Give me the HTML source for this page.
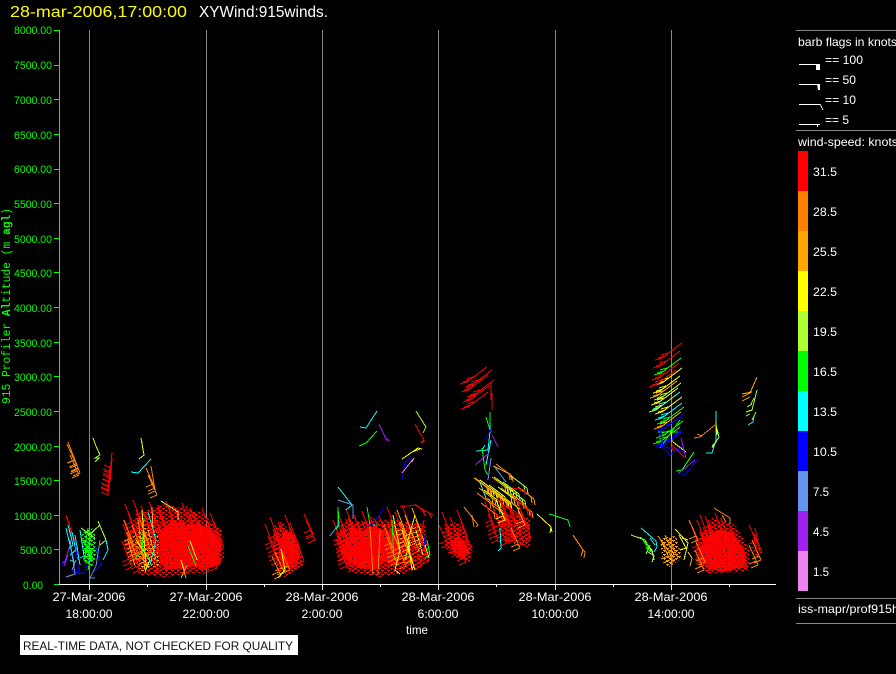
<!DOCTYPE html>
<html><head><meta charset="utf-8"><style>
html,body{margin:0;padding:0;background:#000;width:896px;height:674px;overflow:hidden}
svg{display:block}
text{font-family:"Liberation Sans",sans-serif;font-size:12px;fill:#fff}
.g{fill:#0f0;font-size:11px}
.x{text-anchor:middle}
</style></head><body>
<svg width="896" height="674" viewBox="0 0 896 674" xmlns="http://www.w3.org/2000/svg">
<defs>
<pattern id="sp" width="9" height="7" patternUnits="userSpaceOnUse"><rect width="9" height="7" fill="#f00"/><rect x="2" y="1" width="1" height="1" fill="#000"/><rect x="6" y="4" width="1" height="1" fill="#000"/><rect x="7" y="1" width="1" height="1" fill="#000"/><rect x="1" y="5" width="1" height="1" fill="#000"/></pattern>
<pattern id="p2" width="6" height="4" patternUnits="userSpaceOnUse"><g fill="#f00"><rect x="0" y="0" width="3" height="1"/><rect x="3" y="2" width="3" height="1"/><rect x="1" y="1" width="1" height="1"/><rect x="4" y="3" width="1" height="1"/></g></pattern>
<pattern id="p3" width="6" height="4" patternUnits="userSpaceOnUse"><g fill="#0f0"><rect x="0" y="0" width="3" height="1"/><rect x="3" y="2" width="3" height="1"/><rect x="1" y="1" width="1" height="1"/><rect x="4" y="3" width="1" height="1"/></g></pattern>
<pattern id="p4" width="6" height="4" patternUnits="userSpaceOnUse"><g fill="#ffa500"><rect x="0" y="0" width="3" height="1"/><rect x="3" y="2" width="3" height="1"/><rect x="1" y="1" width="1" height="1"/><rect x="4" y="3" width="1" height="1"/></g></pattern>
<path id="t" d="M0 0L-10 -26M0 0L-7 3M-2 -4L-9 -1M-3 -8L-10 -5"/>
<path id="s" d="M0 0L-9 -20M0 0L-7 3M-2 -4L-9 -1"/>
<path id="u" d="M0 0L20 -15M0 0L-7 2M3 -2L-4 0M6 -5L-1 -3"/>
<path id="v" d="M0 0L-16 -12M0 0L1 6M-3 -2L-2 4"/>
<path id="w" d="M0 0L2 -24M0 0L-7 -3M0 -4L-7 -7M1 -8L-6 -11"/>
<g id="c"><use href="#t" x="3" y="4"/><use href="#t" x="11" y="0"/><use href="#t" x="19" y="6"/><use href="#t" x="27" y="2"/><use href="#t" x="35" y="7"/><use href="#t" x="6" y="13"/><use href="#t" x="14" y="10"/><use href="#t" x="23" y="15"/><use href="#t" x="31" y="12"/><use href="#t" x="39" y="16"/><use href="#t" x="2" y="21"/><use href="#t" x="10" y="24"/><use href="#t" x="18" y="20"/><use href="#t" x="27" y="25"/><use href="#t" x="35" y="22"/></g>
<g id="d"><use href="#t" x="2" y="3"/><use href="#t" x="10" y="8"/><use href="#t" x="17" y="1"/><use href="#t" x="5" y="15"/><use href="#t" x="14" y="18"/><use href="#t" x="21" y="13"/></g>
<g id="e"><use href="#v" x="3" y="2"/><use href="#v" x="12" y="7"/><use href="#v" x="20" y="1"/><use href="#v" x="7" y="12"/><use href="#v" x="18" y="14"/></g>
</defs>
<rect width="896" height="674" fill="#000"/>

<!-- grid -->
<g fill="#888"><rect x="89" y="30" width="1" height="560"/><rect x="206" y="30" width="1" height="560"/><rect x="322" y="30" width="1" height="560"/><rect x="438" y="30" width="1" height="560"/><rect x="555" y="30" width="1" height="560"/><rect x="671" y="30" width="1" height="560"/></g>

<!-- sparse halos -->
<g fill="url(#p2)">
<polygon points="128,535 136,514 165,504 200,512 222,530 224,558 205,572 165,577 140,575 128,555"/>
<polygon points="272,535 282,522 298,540 303,565 285,578 278,570"/>
<polygon points="335,540 345,522 395,520 425,525 430,560 410,572 380,577 350,572"/>
<polygon points="444,525 458,522 473,548 470,562 450,556"/>
<polygon points="695,545 712,518 735,525 750,550 748,572 705,573"/>
<polygon points="492,512 530,518 530,548 505,542"/>
</g>
<polygon fill="url(#p3)" points="82,532 94,528 97,552 92,568 84,562"/>
<polygon fill="url(#p4)" points="660,538 676,536 682,558 668,568 662,556"/>
<polygon fill="url(#p4)" points="128,540 145,525 160,535 160,565 140,572"/>

<!-- dense blobs -->
<g fill="url(#sp)">
<polygon points="160,532 172,520 185,526 200,524 212,530 218,536 222,546 219,555 220,565 205,569 190,566 180,569 165,570 160,560"/>
<polygon points="279,542 285,530 291,534 295,540 300,556 296,566 285,569 281,562 279,553"/>
<polygon points="343,548 351,528 365,532 370,526 385,530 393,528 400,534 399,566 385,562 375,570 358,568 346,558"/>
<polygon points="452,542 458,534 466,544 470,554 462,558 453,552"/>
<polygon points="703,542 712,532 720,530 733,532 745,552 747,567 732,570 722,572 708,568 700,556"/>
</g>

<g fill="none" stroke-width="1" shape-rendering="crispEdges">
<!-- cluster 1 -->
<use href="#c" x="132" y="526" stroke="#f00"/>
<use href="#c" x="165" y="527" stroke="#f00"/>
<use href="#c" x="185" y="532" stroke="#f00"/>
<use href="#c" x="130" y="546" stroke="#f00"/>
<use href="#c" x="182" y="546" stroke="#f00"/>
<use href="#d" x="132" y="543" stroke="#ff8000"/>
<path stroke="#ff0" d="M142 510L146 566M136 540L150 560"/>
<path stroke="#ffa500" d="M128 540L135 566M138 520L145 570M148 530L156 560"/>
<path stroke="#0f0" d="M144 518L142 552L135 558M141 545L150 560M188 546L196 566"/>
<path stroke="#0ff" d="M148 512L156 540L150 565"/>
<path stroke="#adff2f" d="M161 501L178 512L178 520M145 572L150 560L146 568M190 541L197 560"/>
<path stroke="#ffa500" d="M152 507L153 530M181 560L186 578M181 578L187 565"/>
<path stroke="#ff0" d="M181 560L184 570"/>
<!-- top-left barbs -->
<g stroke="#ff8000"><use href="#t" x="78" y="468"/><use href="#t" x="80" y="473"/><use href="#s" x="76" y="464"/><use href="#s" x="79" y="475"/></g>
<path stroke="#adff2f" d="M93 438L96 446L100 455L95 458L99 458L95 462"/>
<g stroke="#f00"><use href="#w" x="110" y="476"/><use href="#w" x="110" y="482"/><use href="#w" x="108" y="490"/><use href="#w" x="108" y="495"/></g>
<path stroke="#ff0" d="M141 438L144 455L139 459"/>
<path stroke="#0ff" d="M151 459L138 473L131 472"/>
<g stroke="#ff8000"><path d="M151 466L155 490"/><use href="#s" x="157" y="495"/><use href="#s" x="155" y="488"/></g>
<!-- cold mix -->
<path stroke="#f00" d="M66 515L75 542M69 522L72 540"/>
<path stroke="#0ff" d="M66 528L74 562L70 560M68 525L73 545L68 550M80 530L84 556L80 558M75 535L80 565M106 540L108 550L103 560M70 555L78 548M72 532L78 560"/>
<path stroke="#00f" d="M75 540L79 574L72 570M95 546L101 565L94 572M88 560L85 572L79 574M66 558L62 566"/>
<path stroke="#6495ed" d="M66 577L75 574L70 540M100 540L96 566L90 578L95 578M72 570L76 560"/>
<path stroke="#a020f0" d="M70 545L65 562L62 562M68 555L64 566"/>
<path stroke="#0f0" d="M83 530L92 535L86 550L94 560M88 528L85 545L92 552L88 570M82 540L94 545M84 550L92 555M86 558L94 548M90 538L84 560"/>
<path stroke="#adff2f" d="M98 521L106 540L100 545M100 525L88 536M81 528L95 538"/>
<use href="#s" x="92" y="560" stroke="#0f0"/>

<!-- cluster 3 -->
<use href="#d" x="278" y="540" stroke="#f00"/>
<use href="#d" x="283" y="548" stroke="#f00"/>
<use href="#d" x="273" y="547" stroke="#f00"/>
<use href="#s" x="284" y="572" stroke="#ff8000"/>
<use href="#s" x="290" y="570" stroke="#ff8000"/>
<use href="#s" x="281" y="576" stroke="#ff8000"/>
<path stroke="#ff0" d="M281 549L285 570L278 578"/>
<g stroke="#f00"><use href="#s" x="315" y="540"/><use href="#s" x="313" y="534"/></g>

<!-- cluster 4 -->
<use href="#c" x="345" y="535" stroke="#f00"/>
<use href="#c" x="362" y="540" stroke="#f00"/>
<use href="#d" x="341" y="543" stroke="#f00"/>
<use href="#c" x="345" y="545" stroke="#f00"/>
<use href="#d" x="395" y="530" stroke="#f00"/>
<use href="#d" x="392" y="548" stroke="#ff8000"/>
<use href="#d" x="405" y="533" stroke="#ffa500"/>
<use href="#d" x="408" y="548" stroke="#f00"/>
<use href="#s" x="412" y="560" stroke="#ff8000"/>
<path stroke="#ff8000" d="M370 527L373 575M380 530L378 575"/>
<path stroke="#ff0" d="M393 515L400 550L395 570L400 574M402 530L415 570M415 515L408 540L412 570M416 530L423 555M412 570L414 565"/>
<path stroke="#0f0" d="M367 507L370 525L378 525M392 520L394 560M427 540L430 555L425 558"/>
<path stroke="#00f" d="M384 508L372 525L365 526M423 528L425 545L420 550"/>
<path stroke="#adff2f" d="M410 540L405 560M425 545L429 558"/>
<path stroke="#f00" d="M400 507L415 505L433 515M415 504L425 512M422 510L426 516M428 512L432 518M424 520L420 540M373 518L380 526"/>
<path stroke="#0ff" d="M338 487L352 505L346 510M377 411L366 428L360 427"/>
<path stroke="#6495ed" d="M338 500L353 505L353 519M330 536L338 525L338 510"/>
<path stroke="#0f0" d="M338 507L339 525L336 530M377 431L366 443L359 446"/>
<path stroke="#a020f0" d="M379 424L387 441M385 438L390 441"/>
<path stroke="#adff2f" d="M416 411L426 427L423 433M426 427L424 431"/>
<path stroke="#f00" d="M415 424L424 440L421 443L425 441"/>
<path stroke="#ff0" d="M402 459L418 448L422 449M412 452L420 449"/>
<path stroke="#00f" d="M402 480L405 462L412 458"/>
<path stroke="#ee82ee" d="M402 473L414 458L412 462"/>

<!-- cluster 5 -->
<use href="#d" x="450" y="535" stroke="#f00"/>
<use href="#s" x="466" y="562" stroke="#f00"/>
<use href="#s" x="448" y="545" stroke="#f00"/>
<path stroke="#ff8000" d="M464 507L478 525L476 527M472 515L474 527"/>

<!-- upper plume -->
<g stroke="#f00"><use href="#u" x="468" y="390"/><use href="#u" x="472" y="385"/><use href="#u" x="467" y="382"/><use href="#u" x="470" y="400"/><use href="#u" x="468" y="407"/><use href="#u" x="474" y="395"/></g>
<path stroke="#f00" d="M491 383L491 400M492 393L492 410"/>
<path stroke="#0f0" d="M490 412L490 430L486 417M491 422L491 432"/>
<path stroke="#00f" d="M491 422L491 430L485 440"/>
<path stroke="#0ff" d="M490 432L488 450L476 451M491 440L486 465M485 445L482 450"/>
<path stroke="#a020f0" d="M492 435L498 447M475 465L489 453"/>
<path stroke="#0f0" d="M482 448L485 470L488 475"/>
<path stroke="#6495ed" d="M491 458L488 480M494 466L506 482"/>
<g stroke="#ff8000"><use href="#v" x="512" y="476"/><use href="#v" x="490" y="490"/></g>
<path stroke="#ffa500" d="M493 466L510 474L512 480"/>
<path stroke="#0ff" d="M479 480L486 498L490 500"/>
<use href="#e" x="488" y="488" stroke="#ffa500"/>
<use href="#e" x="493" y="490" stroke="#ff0"/>
<use href="#e" x="507" y="487" stroke="#adff2f"/>
<use href="#e" x="490" y="503" stroke="#ff8000"/>
<use href="#e" x="514" y="498" stroke="#ffa500"/>
<use href="#e" x="510" y="510" stroke="#f00"/>
<use href="#d" x="493" y="525" stroke="#f00"/>
<use href="#d" x="510" y="525" stroke="#f00"/>
<use href="#s" x="520" y="548" stroke="#ff8000"/>
<use href="#s" x="505" y="520" stroke="#ff0"/>
<use href="#s" x="525" y="525" stroke="#ffa500"/>
<path stroke="#f00" d="M512 488L525 490L525 495M520 490L526 493"/>
<path stroke="#ff0" d="M537 514L551 527L550 533M551 527L552 532"/>
<path stroke="#0ff" d="M500 528L501 548L498 551"/>
<path stroke="#0f0" d="M549 514L568 520L570 527"/>
<path stroke="#ff8000" d="M573 535L583 550L581 556M583 550L585 552L584 558"/>

<!-- right upper column -->
<g>
<use href="#u" x="662" y="358" stroke="#f00"/><use href="#u" x="660" y="366" stroke="#f00"/><use href="#u" x="661" y="373" stroke="#0f0"/><use href="#u" x="659" y="378" stroke="#f00"/><use href="#u" x="662" y="383" stroke="#ff0"/><use href="#u" x="656" y="385" stroke="#f00"/><use href="#u" x="660" y="391" stroke="#ff0"/><use href="#u" x="657" y="396" stroke="#ffa500"/><use href="#u" x="661" y="398" stroke="#adff2f"/><use href="#u" x="658" y="403" stroke="#ff0"/><use href="#u" x="660" y="407" stroke="#0ff"/><use href="#u" x="656" y="410" stroke="#adff2f"/><use href="#u" x="662" y="412" stroke="#ff0"/><use href="#u" x="662" y="418" stroke="#0ff"/><use href="#u" x="664" y="422" stroke="#0f0"/><use href="#u" x="661" y="427" stroke="#ffa500"/><use href="#u" x="664" y="429" stroke="#00f"/><use href="#u" x="663" y="436" stroke="#0f0"/><use href="#u" x="660" y="442" stroke="#0f0"/><use href="#u" x="662" y="445" stroke="#00f"/>
</g>
<path stroke="#0f0" d="M658 432L678 432M660 448L680 420"/>
<path stroke="#00f" d="M660 430L663 446L681 432M660 445L670 455L684 445M661 446L681 451M660 446L662 447"/>
<path stroke="#ff0" d="M671 431L672 442M673 442L686 452"/>
<path stroke="#f00" d="M672 445L685 458M671 446L674 451"/>
<path stroke="#a020f0" d="M681 438L686 458"/>
<path stroke="#0f0" d="M694 452L682 470L676 471"/>
<path stroke="#a020f0" d="M695 460L680 472L678 474"/>
<path stroke="#00f" d="M697 460L685 475L678 473"/>
<path stroke="#0ff" d="M716 411L716 440L712 453L706 453"/>
<path stroke="#ff8000" d="M715 425L700 437L694 438M702 436L697 434"/>
<path stroke="#ff0" d="M716 422L717 435"/>
<path stroke="#adff2f" d="M716 425L719 437L712 448M712 446L716 442"/>
<path stroke="#ffa500" d="M757 377L750 393L742 397M752 392L742 394M750 397L742 401"/>
<path stroke="#adff2f" d="M757 390L752 410L746 412M752 404L747 407M754 398L751 404M756 412L752 420"/>
<path stroke="#0ff" d="M754 416L753 422L748 425"/>
<path stroke="#adff2f" d="M750 414L746 416"/>

<!-- lower right -->
<path stroke="#0ff" d="M641 528L656 541L657 547L654 552M650 538L655 545"/>
<path stroke="#adff2f" d="M631 535L645 540L654 556L652 562M640 537L652 550L654 560M650 545L646 554M648 552L653 555"/>
<path stroke="#0f0" d="M642 538L650 552M645 542L650 547M646 548L652 552"/>
<path stroke="#ffa500" d="M658 536L670 553L672 564M665 535L674 555"/>
<use href="#s" x="670" y="560" stroke="#ffa500"/>
<use href="#s" x="678" y="558" stroke="#ff8000"/>
<path stroke="#ff0" d="M675 529L688 543L684 560M679 535L686 548L680 550M682 538L688 540"/>
<path stroke="#ffa500" d="M688 552L692 558L690 566M672 558L672 564"/>
<use href="#c" x="704" y="542" stroke="#f00"/>
<use href="#d" x="708" y="538" stroke="#f00"/>
<use href="#d" x="700" y="550" stroke="#f00"/>
<use href="#s" x="704" y="570" stroke="#ff8000"/>
<use href="#s" x="705" y="562" stroke="#ff8000"/>
<use href="#s" x="698" y="540" stroke="#ff8000"/>
<path stroke="#ff8000" d="M714 508L730 518L730 524M722 515L726 522"/>
<path stroke="#f00" d="M755 528L760 552M753 532L758 558"/>
<use href="#s" x="761" y="560" stroke="#ff8000"/>
<use href="#s" x="762" y="552" stroke="#f00"/>
<use href="#s" x="758" y="565" stroke="#ff8000"/>
<use href="#s" x="758" y="545" stroke="#f00"/>
</g>

<!-- y axis -->
<g fill="#0f0">
<rect x="59" y="30" width="1" height="555"/>
<rect x="54" y="30" width="5" height="1"/><rect x="54" y="65" width="5" height="1"/><rect x="54" y="99" width="5" height="1"/><rect x="54" y="134" width="5" height="1"/><rect x="54" y="169" width="5" height="1"/><rect x="54" y="203" width="5" height="1"/><rect x="54" y="238" width="5" height="1"/><rect x="54" y="272" width="5" height="1"/><rect x="54" y="307" width="5" height="1"/><rect x="54" y="342" width="5" height="1"/><rect x="54" y="376" width="5" height="1"/><rect x="54" y="411" width="5" height="1"/><rect x="54" y="446" width="5" height="1"/><rect x="54" y="480" width="5" height="1"/><rect x="54" y="515" width="5" height="1"/><rect x="54" y="549" width="5" height="1"/><rect x="54" y="584" width="5" height="1"/>
</g>
<text class="g" x="14" y="34" textLength="38" lengthAdjust="spacingAndGlyphs">8000.00</text>
<text class="g" x="14" y="69" textLength="38" lengthAdjust="spacingAndGlyphs">7500.00</text>
<text class="g" x="14" y="104" textLength="38" lengthAdjust="spacingAndGlyphs">7000.00</text>
<text class="g" x="14" y="139" textLength="38" lengthAdjust="spacingAndGlyphs">6500.00</text>
<text class="g" x="14" y="173" textLength="38" lengthAdjust="spacingAndGlyphs">6000.00</text>
<text class="g" x="14" y="208" textLength="38" lengthAdjust="spacingAndGlyphs">5500.00</text>
<text class="g" x="14" y="243" textLength="38" lengthAdjust="spacingAndGlyphs">5000.00</text>
<text class="g" x="14" y="277" textLength="38" lengthAdjust="spacingAndGlyphs">4500.00</text>
<text class="g" x="14" y="312" textLength="38" lengthAdjust="spacingAndGlyphs">4000.00</text>
<text class="g" x="14" y="347" textLength="38" lengthAdjust="spacingAndGlyphs">3500.00</text>
<text class="g" x="14" y="381" textLength="38" lengthAdjust="spacingAndGlyphs">3000.00</text>
<text class="g" x="14" y="416" textLength="38" lengthAdjust="spacingAndGlyphs">2500.00</text>
<text class="g" x="14" y="451" textLength="38" lengthAdjust="spacingAndGlyphs">2000.00</text>
<text class="g" x="14" y="485" textLength="38" lengthAdjust="spacingAndGlyphs">1500.00</text>
<text class="g" x="14" y="520" textLength="38" lengthAdjust="spacingAndGlyphs">1000.00</text>
<text class="g" x="20" y="554" textLength="32" lengthAdjust="spacingAndGlyphs">500.00</text>
<text class="g" x="23" y="589" textLength="20" lengthAdjust="spacingAndGlyphs">0.00</text>
<text transform="translate(10,404) rotate(-90)" style="font-family:'Liberation Mono',monospace;font-size:12px;fill:#0f0" textLength="196" lengthAdjust="spacingAndGlyphs">915 Profiler <tspan font-weight="bold">Al</tspan>titude (m <tspan font-weight="bold">agl</tspan>)</text>

<!-- x axis -->
<g fill="#fff">
<rect x="59" y="584" width="717" height="1"/>
<rect x="89" y="585" width="1" height="5"/><rect x="206" y="585" width="1" height="5"/><rect x="322" y="585" width="1" height="5"/><rect x="438" y="585" width="1" height="5"/><rect x="555" y="585" width="1" height="5"/><rect x="671" y="585" width="1" height="5"/>
<rect x="147" y="585" width="1" height="2"/><rect x="264" y="585" width="1" height="2"/><rect x="380" y="585" width="1" height="2"/><rect x="496" y="585" width="1" height="2"/><rect x="613" y="585" width="1" height="2"/><rect x="729" y="585" width="1" height="2"/>
</g>
<text class="x" x="89" y="601" textLength="73" lengthAdjust="spacingAndGlyphs">27-Mar-2006</text><text class="x" x="89" y="618" textLength="47" lengthAdjust="spacingAndGlyphs">18:00:00</text>
<text class="x" x="206" y="601" textLength="73" lengthAdjust="spacingAndGlyphs">27-Mar-2006</text><text class="x" x="206" y="618" textLength="47" lengthAdjust="spacingAndGlyphs">22:00:00</text>
<text class="x" x="322" y="601" textLength="73" lengthAdjust="spacingAndGlyphs">28-Mar-2006</text><text class="x" x="322" y="618" textLength="41" lengthAdjust="spacingAndGlyphs">2:00:00</text>
<text class="x" x="438" y="601" textLength="73" lengthAdjust="spacingAndGlyphs">28-Mar-2006</text><text class="x" x="438" y="618" textLength="41" lengthAdjust="spacingAndGlyphs">6:00:00</text>
<text class="x" x="555" y="601" textLength="73" lengthAdjust="spacingAndGlyphs">28-Mar-2006</text><text class="x" x="555" y="618" textLength="47" lengthAdjust="spacingAndGlyphs">10:00:00</text>
<text class="x" x="671" y="601" textLength="73" lengthAdjust="spacingAndGlyphs">28-Mar-2006</text><text class="x" x="671" y="618" textLength="47" lengthAdjust="spacingAndGlyphs">14:00:00</text>
<text class="x" x="417" y="634" textLength="22" lengthAdjust="spacingAndGlyphs">time</text>

<!-- title -->
<text x="10" y="17" style="font-size:16px;fill:#ff0" textLength="177" lengthAdjust="spacingAndGlyphs">28-mar-2006,17:00:00</text>
<text x="199" y="17" style="font-size:16px;fill:#fff" textLength="129" lengthAdjust="spacingAndGlyphs">XYWind:915winds.</text>

<!-- notice -->
<rect x="20" y="635" width="278" height="20" fill="#fff"/>
<text x="23" y="650" style="font-size:12px;fill:#111" textLength="270" lengthAdjust="spacingAndGlyphs">REAL-TIME DATA, NOT CHECKED FOR QUALITY</text>

<!-- legend -->
<g fill="#888">
<rect x="796" y="30" width="100" height="1"/><rect x="796" y="130" width="100" height="1"/><rect x="796" y="598" width="100" height="1"/><rect x="796" y="623" width="100" height="1"/>
</g>
<text x="798" y="46" textLength="99" lengthAdjust="spacingAndGlyphs">barb flags in knots</text>
<g fill="#fff">
<rect x="799" y="64" width="21" height="1"/><rect x="816" y="64" width="4" height="6"/>
<rect x="799" y="84" width="21" height="1"/><polygon points="817,84 820,84 820,90 818,90"/>
<rect x="799" y="104" width="21" height="1"/>
<rect x="799" y="124" width="21" height="1"/><rect x="817" y="125" width="1" height="2"/>
</g>
<path d="M820 104L823 110" stroke="#fff" fill="none" shape-rendering="crispEdges"/>
<text x="825" y="64" textLength="38" lengthAdjust="spacingAndGlyphs">== 100</text>
<text x="825" y="84" textLength="31" lengthAdjust="spacingAndGlyphs">== 50</text>
<text x="825" y="104" textLength="31" lengthAdjust="spacingAndGlyphs">== 10</text>
<text x="825" y="124" textLength="24" lengthAdjust="spacingAndGlyphs">== 5</text>
<text x="798" y="146" textLength="100" lengthAdjust="spacingAndGlyphs">wind-speed: knots</text>
<rect x="798" y="151" width="10" height="40" fill="#f00"/>
<rect x="798" y="191" width="10" height="40" fill="#ff8000"/>
<rect x="798" y="231" width="10" height="40" fill="#ffa500"/>
<rect x="798" y="271" width="10" height="40" fill="#ff0"/>
<rect x="798" y="311" width="10" height="40" fill="#adff2f"/>
<rect x="798" y="351" width="10" height="40" fill="#0f0"/>
<rect x="798" y="391" width="10" height="40" fill="#0ff"/>
<rect x="798" y="431" width="10" height="40" fill="#00f"/>
<rect x="798" y="471" width="10" height="40" fill="#6495ed"/>
<rect x="798" y="511" width="10" height="40" fill="#a020f0"/>
<rect x="798" y="551" width="10" height="40" fill="#ee82ee"/>
<text x="813" y="176" textLength="24" lengthAdjust="spacingAndGlyphs">31.5</text>
<text x="813" y="216" textLength="24" lengthAdjust="spacingAndGlyphs">28.5</text>
<text x="813" y="256" textLength="24" lengthAdjust="spacingAndGlyphs">25.5</text>
<text x="813" y="296" textLength="24" lengthAdjust="spacingAndGlyphs">22.5</text>
<text x="813" y="336" textLength="24" lengthAdjust="spacingAndGlyphs">19.5</text>
<text x="813" y="376" textLength="24" lengthAdjust="spacingAndGlyphs">16.5</text>
<text x="813" y="416" textLength="24" lengthAdjust="spacingAndGlyphs">13.5</text>
<text x="813" y="456" textLength="24" lengthAdjust="spacingAndGlyphs">10.5</text>
<text x="813" y="496" textLength="16" lengthAdjust="spacingAndGlyphs">7.5</text>
<text x="813" y="536" textLength="16" lengthAdjust="spacingAndGlyphs">4.5</text>
<text x="813" y="576" textLength="16" lengthAdjust="spacingAndGlyphs">1.5</text>
<text x="798" y="613" textLength="101" lengthAdjust="spacingAndGlyphs">iss-mapr/prof915h</text>
</svg>
</body></html>
